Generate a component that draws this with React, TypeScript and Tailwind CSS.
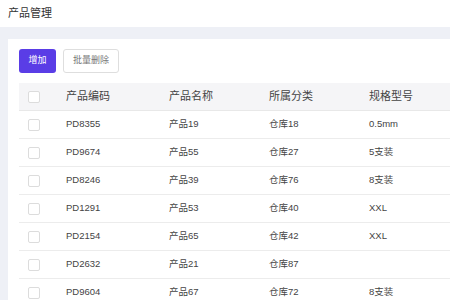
import React from "react";

const rows = [
  ["PD8355", "产品19", "仓库18", "0.5mm"],
  ["PD9674", "产品55", "仓库27", "5支装"],
  ["PD8246", "产品39", "仓库76", "8支装"],
  ["PD1291", "产品53", "仓库40", "XXL"],
  ["PD2154", "产品65", "仓库42", "XXL"],
  ["PD2632", "产品21", "仓库87", ""],
  ["PD9604", "产品67", "仓库72", "8支装"],
];

function Box() {
  return <div className="w-[12px] h-[12px] border border-[#dcdcdc] rounded-[2px] bg-white" />;
}

export default function App() {
  return (
    <div
      className="w-[450px] h-[300px] overflow-hidden bg-[#eef0f6] flex flex-col"
      style={{ fontFamily: '"Liberation Sans", "Noto Sans CJK SC", sans-serif' }}
    >
      <div className="h-[27px] shrink-0 bg-white flex items-center pl-[8px] text-[11px] text-[#333]">
        产品管理
      </div>
      <div className="flex-1 pt-[12px] pl-[8px]">
        <div className="bg-white h-full pl-[11px] pt-[10px]">
          <div className="flex gap-[7px] h-[24px]">
            <div className="w-[37px] h-[24px] bg-[#5a3de6] rounded-[3px] text-white text-[9px] flex items-center justify-center">
              增加
            </div>
            <div className="w-[56px] h-[24px] border border-[#dedede] rounded-[3px] text-[#777] text-[9px] flex items-center justify-center">
              批量删除
            </div>
          </div>
          <div className="mt-[10px]">
            <div className="flex h-[28px] items-center bg-[#f5f5f7] border-b border-[#e8e8e8] text-[11px] text-[#444]">
              <div className="w-[37px] pl-[9px] flex items-center"><Box /></div>
              <div className="w-[103px] pl-[10px]">产品编码</div>
              <div className="w-[100px] pl-[10px]">产品名称</div>
              <div className="w-[100px] pl-[10px]">所属分类</div>
              <div className="flex-1 pl-[10px]">规格型号</div>
            </div>
            {rows.map((r, i) => (
              <div key={i} className="flex h-[28px] items-center border-b border-[#ececec] text-[9.5px] text-[#444]">
                <div className="w-[37px] pl-[9px] flex items-center"><Box /></div>
                <div className="w-[103px] pl-[10px]">{r[0]}</div>
                <div className="w-[100px] pl-[10px]">{r[1]}</div>
                <div className="w-[100px] pl-[10px]">{r[2]}</div>
                <div className="flex-1 pl-[10px]">{r[3]}</div>
              </div>
            ))}
          </div>
        </div>
      </div>
    </div>
  );
}
